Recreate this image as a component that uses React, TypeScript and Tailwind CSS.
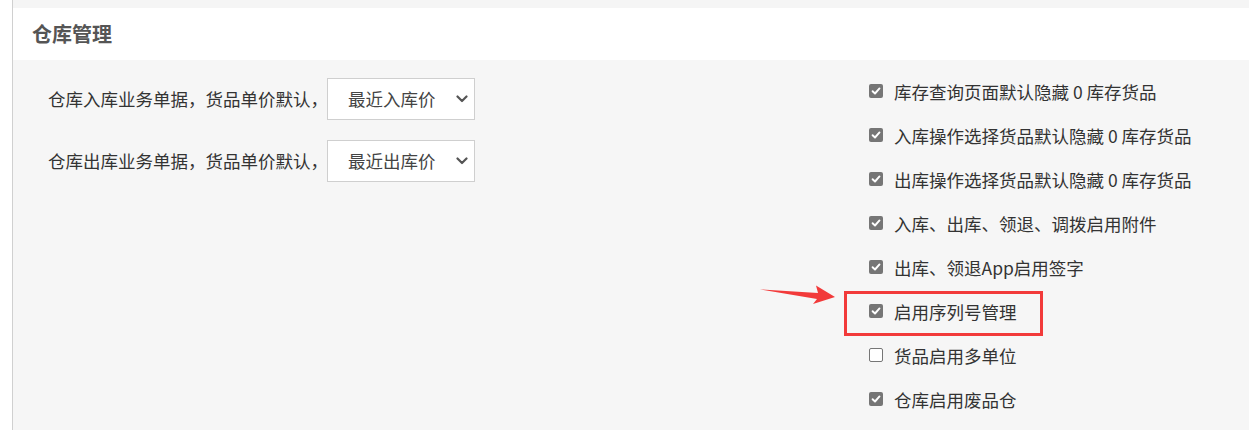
import React from "react";

const priceRows = [
  { label: "仓库入库业务单据，货品单价默认，", value: "最近入库价" },
  { label: "仓库出库业务单据，货品单价默认，", value: "最近出库价" },
];

const options = [
  { text: "库存查询页面默认隐藏 0 库存货品", checked: true },
  { text: "入库操作选择货品默认隐藏 0 库存货品", checked: true },
  { text: "出库操作选择货品默认隐藏 0 库存货品", checked: true },
  { text: "入库、出库、领退、调拨启用附件", checked: true },
  { text: "出库、领退App启用签字", checked: true },
  { text: "启用序列号管理", checked: true },
  { text: "货品启用多单位", checked: false },
  { text: "仓库启用废品仓", checked: true },
];

const CheckBox = ({ checked }: { checked: boolean }) =>
  checked ? (
    <span className="flex h-[14px] w-[14px] items-center justify-center rounded-[2px] bg-[#767676]">
      <svg width="10" height="10" viewBox="0 0 10 10" fill="none">
        <path d="M1.6 5.2 L4 7.5 L8.5 2.4" stroke="#fff" strokeWidth={1.9} strokeLinecap="round" strokeLinejoin="round" />
      </svg>
    </span>
  ) : (
    <span className="block h-[14px] w-[14px] rounded-[2px] border border-[#767676] bg-white" />
  );

const Select = ({ value }: { value: string }) => (
  <div className="flex h-[42px] w-[148px] items-center justify-between border border-[#cfcfcf] bg-white pl-[20px] pr-[6px] text-[#444]">
    <span>{value}</span>
    <svg width="12" height="8" viewBox="0 0 12 8" fill="none">
      <path d="M1.5 1.5 L6 6 L10.5 1.5" stroke="#555" strokeWidth={2.2} strokeLinecap="round" strokeLinejoin="round" />
    </svg>
  </div>
);

export default function App() {
  return (
    <div
      className="min-h-[436px] w-[1249px] bg-white pl-[12px]"
      style={{ fontFamily: '"Noto Sans CJK SC", "Noto Sans", sans-serif' }}
    >
      <div className="border-l border-[#d0d0d0]">
        <div className="h-[8px] bg-[#f5f5f5]" />
        <div className="flex h-[52px] items-center bg-white pl-[19px]">
          <h2 className="text-[20px] leading-none font-bold text-[#555]">仓库管理</h2>
        </div>

        <div className="relative flex bg-[#f6f6f6] pt-[10px] pb-[8px] text-[17.5px] leading-none text-[#333]">
          <div className="flex w-[856px] flex-col gap-[20px] pt-[8px] pl-[35px]">
            {priceRows.map((r) => (
              <div key={r.label} className="flex items-center">
                <span className="w-[279px] whitespace-nowrap">{r.label}</span>
                <Select value={r.value} />
              </div>
            ))}
          </div>

          <div className="flex flex-col">
            {options.map((o) => (
              <label key={o.text} className="flex h-[44px] items-center gap-[11px] whitespace-nowrap">
                <span className="-mt-[2px]">
                  <CheckBox checked={o.checked} />
                </span>
                <span>{o.text}</span>
              </label>
            ))}
          </div>

          {/* annotation */}
          <div className="pointer-events-none absolute top-[231px] left-[831px] h-[45px] w-[199px] border-[3px] border-[#f23a3a]" />
          <svg className="pointer-events-none absolute top-[222px] left-[745px]" width="80" height="26" viewBox="0 0 80 26">
            <polygon points="2,7.5 60,11 58,3.5 77,15 55,22 59,17" fill="#f23a3a" />
          </svg>
        </div>
      </div>
    </div>
  );
}
